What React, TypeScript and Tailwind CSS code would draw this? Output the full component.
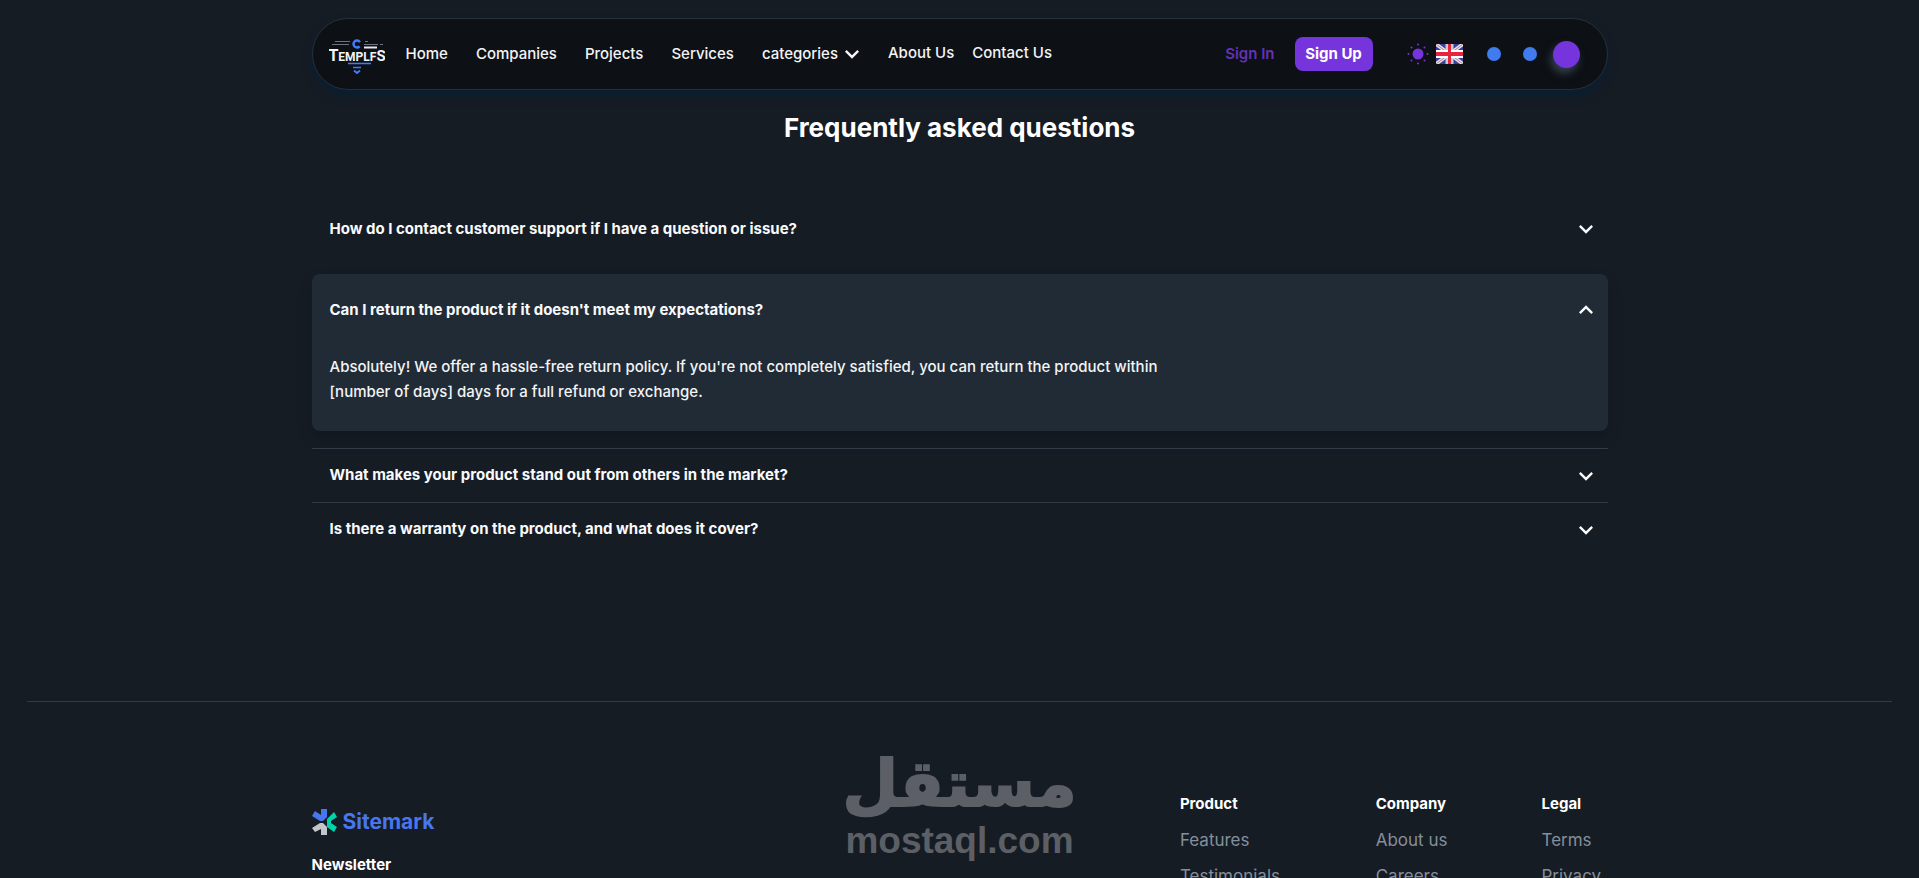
import { useState } from "react";

const navLinks = ["Home", "Companies", "Projects", "Services"];

const faqs = [
  {
    question: "How do I contact customer support if I have a question or issue?",
    answer: "You can reach our customer support team by email or by phone. We're here to assist you promptly.",
  },
  {
    question: "Can I return the product if it doesn't meet my expectations?",
    answer:
      "Absolutely! We offer a hassle-free return policy. If you're not completely satisfied, you can return the product within [number of days] days for a full refund or exchange.",
  },
  {
    question: "What makes your product stand out from others in the market?",
    answer: "Our product distinguishes itself through its adaptability, durability, and innovative features.",
  },
  {
    question: "Is there a warranty on the product, and what does it cover?",
    answer: "Yes, our product comes with a warranty. It covers defects in materials and workmanship.",
  },
];

const footerColumns = [
  { title: "Product", links: ["Features", "Testimonials"], width: "w-[105px]" },
  { title: "Company", links: ["About us", "Careers"], width: "w-[75px]" },
  { title: "Legal", links: ["Terms", "Privacy"], width: "w-[66px]" },
];

function Chevron({ up = false }: { up?: boolean }) {
  return (
    <svg className="w-7 h-7 shrink-0" viewBox="0 0 24 24" fill="currentColor">
      {up ? (
        <path d="M12 8l-6 6 1.41 1.41L12 10.83l4.59 4.58L18 14z" />
      ) : (
        <path d="M16.59 8.59 12 13.17 7.41 8.59 6 10l6 6 6-6z" />
      )}
    </svg>
  );
}

function TemplesLogo() {
  return (
    <svg className="w-14 h-10" viewBox="0 0 56 40">
      <path d="M6 7.5h15M3 10.5h17M36 7.5h3M35 10.5h14M51 10.5h3" stroke="#6b7280" strokeWidth="1" />
      <path d="M35 13.5h13" stroke="#e5e7eb" strokeWidth="2" />
      <circle
        cx="28"
        cy="10"
        r="3.5"
        fill="none"
        stroke="#407bff"
        strokeWidth="2.4"
        strokeDasharray="17 5"
        strokeDashoffset="-2.5"
      />
      <text x="28" y="27" textAnchor="middle" fontWeight="700" fill="#f3f4f6" fontFamily="Roboto, sans-serif">
        <tspan fontSize="16">T</tspan>
        <tspan fontSize="12">EMPLF</tspan>
        <tspan fontSize="15">S</tspan>
      </text>
      <path d="M19 29.5h23M24 33.5h8" stroke="#407bff" strokeWidth="1.5" />
      <path d="M25 36.5l3 2.5 3-2.5" fill="none" stroke="#407bff" strokeWidth="2" />
    </svg>
  );
}

function SunIcon() {
  return (
    <svg className="w-[22px] h-[22px]" viewBox="0 0 22 22" fill="#7635dc">
      <circle cx="11" cy="11" r="5.5" />
      <circle cx="11" cy="1.5" r="1" />
      <circle cx="11" cy="20.5" r="1" />
      <circle cx="1.5" cy="11" r="1" />
      <circle cx="20.5" cy="11" r="1" />
      <circle cx="4.5" cy="4.5" r="1" />
      <circle cx="17.5" cy="4.5" r="1" />
      <circle cx="4.5" cy="17.5" r="1" />
      <circle cx="17.5" cy="17.5" r="1" />
    </svg>
  );
}

function FlagIcon() {
  return (
    <svg className="w-[27px] h-5" viewBox="0 0 27 20">
      <path fill="#3b3f9f" d="M0 0h27v20H0z" />
      <path stroke="#e5e7eb" strokeWidth="3.5" d="M0 0l27 20M27 0L0 20" />
      <path stroke="#b5474f" strokeWidth="0.7" d="M0 0l10 7.5M27 0L17 7.5M0 20l10-7.5M27 20l-10-7.5" />
      <path fill="#c9ccd4" d="M9.5 0h8v20h-8z" />
      <path fill="#fff" d="M0 6h27v8H0z" />
      <path fill="#e5253d" d="M12 0h3v20h-3zM0 8h27v4H0z" />
    </svg>
  );
}

function Navbar() {
  return (
    <header className="pt-[18px]">
      <nav className="max-w-[1296px] h-[72px] mx-auto pl-4 pr-[27px] flex items-center rounded-full bg-[#0d1015] border border-[#26303a] shadow-[0_6px_10px_rgba(2,31,59,0.6)] text-[15px] font-medium text-[#f3f4f6]">
        <a href="#" aria-label="Temples" className="mr-[21px]">
          <TemplesLogo />
        </a>
        <div className="flex items-center gap-7">
          {navLinks.map((link) => (
            <a key={link} href="#" className="whitespace-nowrap">
              {link}
            </a>
          ))}
          <button className="flex items-center">
            categories
            <Chevron />
          </button>
        </div>
        <div className="flex items-center gap-[18px] ml-[22px] pb-0.5 whitespace-nowrap">
          <a href="#">About Us</a>
          <a href="#">Contact Us</a>
        </div>

        <div className="ml-auto flex items-center">
          <button className="mr-5 font-semibold text-[#6332b8]">Sign In</button>
          <button className="w-[78px] h-[34px] mr-[34px] rounded-lg bg-[#7635dc] font-bold text-white">Sign Up</button>
          <button aria-label="Toggle theme" className="mr-[7px]">
            <SunIcon />
          </button>
          <button aria-label="Language" className="mr-6">
            <FlagIcon />
          </button>
          <button aria-label="Blue theme" className="w-3.5 h-3.5 mr-[22px] rounded-full bg-[#407bef]" />
          <button aria-label="Default theme" className="w-3.5 h-3.5 mr-4 rounded-full bg-[#407bef]" />
          <button
            aria-label="Purple theme"
            className="w-[27px] h-[27px] rounded-full bg-[#7635dc] shadow-[-2px_5px_9px_rgba(90,115,140,0.5)]"
          />
        </div>
      </nav>
    </header>
  );
}

function Faq() {
  const [open, setOpen] = useState(1);

  return (
    <section className="max-w-[1296px] mx-auto pt-4">
      <h2 className="text-[26px] leading-[44px] font-bold text-center text-white">Frequently asked questions</h2>

      <div className="mt-[52px]">
        {faqs.map((faq, i) => {
          const isOpen = i === open;
          return (
            <div
              key={faq.question}
              className={
                isOpen
                  ? "mt-[18px] mb-[17px] rounded-lg bg-[#212b36] shadow-[0_8px_16px_rgba(0,0,0,0.16)]"
                  : i > open
                    ? "border-t border-[#323c48]"
                    : ""
              }
            >
              <button
                aria-expanded={isOpen}
                onClick={() => setOpen(isOpen ? -1 : i)}
                className={`w-full pl-[18px] pr-2 flex items-center justify-between text-left text-[15px] font-bold text-[#f9fafb] ${
                  isOpen ? "h-[72px]" : i > open ? "h-[53px]" : "h-[54px]"
                }`}
              >
                {faq.question}
                <Chevron up={isOpen} />
              </button>
              {isOpen && (
                <p className="max-w-[886px] px-[18px] pt-2 pb-[27px] text-[15px] leading-[25px] font-medium text-[#f3f4f6]">
                  {faq.answer}
                </p>
              )}
            </div>
          );
        })}
      </div>
    </section>
  );
}

function SitemarkLogo() {
  return (
    <a href="#" className="flex items-center gap-[6px] text-[21px] leading-7 font-bold text-[#4876ee]">
      <svg className="w-[25px] h-7" viewBox="0 0 25 28">
        <path fill="#4876ee" d="M9 1h6v8l-4 4H8L0 8l3-5 6 4z" />
        <path fill="#00d3ab" d="M22 4l3 5-6 4v2l6 4-3 5-7-5v-8z" />
        <path fill="#c3c5ca" d="M8 15h3l4 4v8H9v-6l-6 3-3-4z" />
      </svg>
      Sitemark
    </a>
  );
}

function Footer() {
  return (
    <footer className="relative mt-[145px] mx-[27px] border-t border-[#323c48]">
      <div className="max-w-[1296px] mx-auto pt-[88px] flex justify-between">
        <div className="w-3/5 pt-[18px]">
          <SitemarkLogo />
          <label htmlFor="newsletter" className="block mt-4 text-[15px] leading-[25px] font-bold text-white">
            Newsletter
          </label>
          <input
            id="newsletter"
            type="email"
            placeholder="Your email address"
            className="mt-6 h-10 px-3 rounded-lg border border-[#323c48] text-[15px]"
          />
        </div>
        {footerColumns.map((column) => (
          <div key={column.title} className={`${column.width} whitespace-nowrap`}>
            <h3 className="text-[15px] leading-7 font-bold text-white">{column.title}</h3>
            <ul className="mt-1 text-[17px] leading-9 text-[#858f9b]">
              {column.links.map((link) => (
                <li key={link}>
                  <a href="#">{link}</a>
                </li>
              ))}
            </ul>
          </div>
        ))}
      </div>

      {/* Watermark */}
      <div className="absolute inset-x-0 top-11 flex flex-col items-center text-[#5c6066] pointer-events-none">
        <span
          lang="ar"
          dir="rtl"
          className="font-['DejaVu_Sans'] font-bold text-[64px] leading-[76px] [-webkit-text-stroke:2px_#5c6066] [stroke-linejoin:round]"
        >
          مستقل
        </span>
        <span className="font-['Liberation_Sans'] font-bold text-[37px] leading-[38px]">mostaql.com</span>
      </div>
    </footer>
  );
}

export default function App() {
  return (
    <div className="h-screen overflow-hidden bg-[#161c24] font-['Inter',sans-serif]">
      <Navbar />
      <Faq />
      <Footer />
    </div>
  );
}
